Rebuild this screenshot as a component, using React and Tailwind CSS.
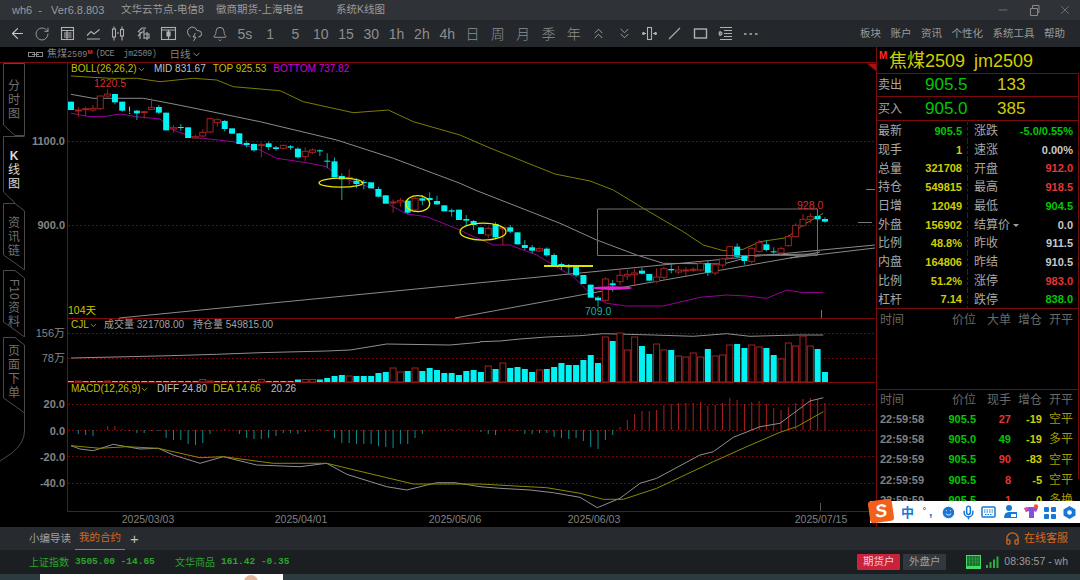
import { ArrowLeft, RotateCw, CloudLightning, Bell, ChevronsUp, ChevronsDown, Headphones, ChevronDown, X, Minus, Mic, Smile } from 'lucide-react'

// 图上数据都是从 3 倍放大图上量的，除以 3 再加原点就是页面坐标
const CYAN = '#00f2f2'
const RED = '#a32222'
const stepX = 7.32
const xAt = (i) => 71 + stepX * i

// [type, bodyTop, bodyBottom, high, low]
const candlesA = [
  ['c',125,150,125,150],['r',150,153,142,172],['r',146,149,140,168],['r',145,150,135,155],['r',108,146,108,150],
  ['r',102,108,88,112],['c',102,127,102,133],['c',125,152,125,155],['w',155,156,140,162],['c',152,160,150,180],
  ['r',155,158,152,176],['r',142,148,115,150],['c',141,158,135,162],['c',158,211,158,211],['r',203,207,195,218],
  ['c',201,204,192,212],['c',202,234,202,234],['r',230,234,225,236],['r',217,228,208,232],['r',176,216,173,220],
  ['r',179,188,175,200],['c',183,207,180,215],['c',205,221,205,221],['c',220,252,220,252],['c',249,255,242,262],
  ['c',252,271,250,275],['r',254,257,248,292],['c',250,261,245,270],['c',262,267,258,272],['r',256,265,254,268],
  ['c',259,263,255,270],['c',266,292,262,296],['r',274,290,262,304],['r',270,277,265,282],['c',271,273,268,288],
  ['c',302,305,280,325],['c',304,352,292,352],['c',348,358,340,420],['r',352,356,328,374],['c',362,372,355,385],
  ['c',366,369,360,388],['c',367,385,367,385],['c',387,410,380,412],['c',406,431,406,431],['r',426,429,418,458],
  ['r',421,426,414,440],['c',422,458,420,462],['r',415,450,412,452],['c',415,422,405,435],['c',414,420,397,424],
  ['c',423,433,407,435],['c',436,454,436,454],['c',451,455,446,470],['c',449,480,449,480],
]
const candlesB = [
  ['c',87,92,75,105],['c',93,105,90,120],['c',112,132,112,132],['r',115,135,110,145],['c',102,142,97,144],
  ['r',112,116,110,165],['c',112,125,105,130],['c',127,163,127,163],['c',165,174,150,180],['c',172,182,165,190],
  ['r',176,183,172,186],['c',176,196,172,200],['c',195,226,190,230],['c',222,228,218,240],['c',228,232,222,250],
  ['c',229,256,225,262],['c',255,282,255,282],['c',284,323,284,323],['c',323,331,318,350],['r',267,331,262,335],
  ['c',280,286,270,305],['r',256,275,235,285],['r',253,258,240,270],['r',249,254,236,285],['c',242,251,232,254],
  ['c',252,272,252,272],['r',261,274,235,280],['r',236,262,230,268],['c',237,241,222,250],['r',240,246,228,252],
  ['r',240,243,232,258],['r',238,241,232,246],['r',220,240,215,244],['c',220,248,212,258],['r',224,249,222,256],
  ['r',207,225,203,232],['r',170,204,168,206],['c',170,200,160,205],['c',198,213,195,224],['r',175,214,172,220],
  ['r',157,184,150,188],['c',163,180,150,184],['c',184,187,172,196],['r',176,189,170,194],['r',140,167,134,170],
  ['r',106,140,100,142],['r',88,107,72,110],['r',80,88,70,100],['c',78,88,78,88],['c',87,95,82,98],
]
const candles = [
  ...candlesA.map(([t, a, b, h, l]) => [t, 60 + a / 3, 60 + b / 3, 60 + h / 3, 60 + l / 3]),
  ...candlesB.map(([t, a, b, h, l]) => [t, 190 + a / 3, 190 + b / 3, 190 + h / 3, 190 + l / 3]),
]

const volumes = [
  ...Array.from({ length: 35 }, (_, i) => [[1,5,18,19,26,32,33].includes(i) ? 'r' : 'c', [18,26,32].includes(i) ? 2.5 : [31,33,34].includes(i) ? 2.5 : 1]),
  ['c',4],['c',6],['c',7],['r',6],['c',6],['c',6],['c',6],['c',9],['c',10],['r',14],['r',10],['c',11],['r',14],['c',11],
  ['c',14],['c',12],['c',9],['c',9],['c',7],['c',11],['c',12],['c',10],['r',16],['c',13],['r',19],['c',14],['c',15],['c',13],
  ['c',10],['r',12],['c',13],['c',15],['c',19],['c',17],['c',17],['c',22],['c',27],['c',19],['r',45],['c',41],['r',49],['r',32],
  ['r',45],['c',36],['c',28],['r',38],['r',32],['c',32],['r',26],['r',25],['r',29],['r',25],['c',33],['r',26],['r',27],['r',37],
  ['c',38],['c',34],['r',37],['r',35],['c',34],['c',27],['r',23],['r',39],['r',36],['r',46],['r',36],['c',33],['c',10],
]

const macdBars = [
  0,-4,-5,-6,0,4,4,1,-1,-3,-3,-1,-1,-8,-10,-10,-14,-15,-13,-4,0,1,0,-4,-8,-9,-9,-8,-6,-3,-3,-4,-2,0,1,-1,-8,-13,-13,-14,-14,-14,-16,-17,-18,-14,-14,-8,-4,0,0,1,1,1,0,0,-2,
  -4,-5,0,1,-1,-4,-4,-3,-3,-7,-8,-9,-8,-11,-17,-19,-10,-5,3,10,16,19,19,20,25,26,27,27,27,28,24,25,27,32,30,26,28,29,26,22,20,23,27,31,32,31,27,
]

const pts = (list, ox, oy) => list.map(([x, y]) => `${(ox + x / 3).toFixed(1)},${(oy + y / 3).toFixed(1)}`).join(' ')

const bollTop = pts([[33,48],[150,55],[230,55],[300,65],[400,55],[470,60],[520,80],[660,92],[730,125],[820,145],[880,158],[985,150],[1060,185],[1200,225]], 60, 60) + ' 490,148 520,160 555,174 590,181 ' + pts([[490,0],[580,55],[700,125],[760,165],[820,182],[880,178],[930,155],[1010,143],[1060,105],[1120,70]], 450, 190)
const bollMid = pts([[33,103],[100,115],[250,115],[330,130],[430,150],[600,185],[830,240],[1000,295],[1200,370]], 60, 60) + ' ' + pts([[75,0],[330,100],[440,150],[560,195],[640,220],[820,222],[920,195],[1100,192]], 450, 190)
const bollBottom = pts([[33,160],[90,170],[130,170],[180,162],[230,170],[300,177],[340,210],[400,232],[520,245],[600,270],[650,295],[740,308],[800,320],[830,345],[890,370],[940,385],[990,435],[1040,462],[1100,470],[1200,510]], 60, 60) + ' ' + pts([[60,135],[130,165],[180,165],[260,195],[310,225],[370,260],[430,320],[470,340],[530,348],[640,348],[750,322],[830,315],[890,318],[950,325],[1010,300],[1060,308],[1120,307]], 450, 190)
const volLine = pts([[33,129],[330,122],[470,118],[600,113],[800,108],[870,105],[980,87],[1170,90],[1260,82]], 60, 315) + ' ' + pts([[0,80],[60,78],[120,72],[200,66],[300,62],[370,56],[520,60],[640,64],[740,56],[810,64],[950,60],[1030,60]], 480, 315)
const deaLine = pts([[33,392],[120,400],[200,395],[295,400],[420,428],[490,425],[640,445],[800,445],[1060,507],[1260,507]], 60, 315) + ' ' + pts([[90,512],[200,518],[300,535],[370,553],[430,553],[530,520],[700,440],[800,395],[900,352],[950,335],[1030,290]], 480, 315)
const diffLine = pts([[33,392],[60,402],[100,407],[160,388],[240,402],[295,400],[340,420],[420,445],[490,425],[590,450],[720,455],[800,445],[860,478],[980,515],[1040,525],[1130,503],[1185,503],[1260,515]], 60, 315) + ' ' + pts([[60,520],[150,525],[220,533],[300,547],[352,578],[420,550],[480,505],[530,490],[660,420],[700,410],[760,367],[840,335],[900,325],[990,258],[1030,248]], 480, 315)

function Chart() {
  const axis = [[141,'1100.0'],[225,'900.0'],[333,'156万'],[358,'78万'],[404,'20.0'],[431,'0.0'],[457,'-20.0'],[483,'-40.0']]
  const grid = [141,225,333,358,404,430,456,483]
  const dates = [[148,'2025/03/03'],[301,'2025/04/01'],[455,'2025/05/06'],[594,'2025/06/03'],[821,'2025/07/15']]
  return (
    <svg className="block" width="851" height="464" viewBox="25 63 851 464">
      {axis.map(([y, t]) => (
        <text key={t} x="65" y={y + 4} textAnchor="end" fontSize="11" fontWeight={t.includes('万') ? 400 : 700} fill="#858585">{t}</text>
      ))}
      {grid.map(y => <line key={y} x1="68" x2="875" y1={y + 0.5} y2={y + 0.5} stroke="#6e0808" strokeDasharray="2 2" />)}
      <path d="M67.5 63V511.5H875.5M68 318.5H875M68 382.5H875" fill="none" stroke="#7c0a0a" />
      <polygon points="867,63.5 876,63.5 876,71" fill="#b00d0d" />

      {/* 主图 */}
      <polyline points={bollTop} fill="none" stroke="#7d7d00" />
      <polyline points={bollMid} fill="none" stroke="#8a8a8a" />
      <polyline points={bollBottom} fill="none" stroke="#980098" />
      <path d="M119 318L662 265L875 245M455 318L630 286L790 258L820 252M790 258L875 248" fill="none" stroke="#8a8a8a" />
      {candles.map(([t, top, bot, hi, lo], i) => {
        const x = xAt(i)
        const color = t === 'c' ? '#0fa5a5' : t === 'r' ? RED : '#bbb'
        return (
          <g key={i}>
            <line x1={x} x2={x} y1={hi} y2={lo} stroke={color} />
            <rect x={x - 3} y={top} width="6" height={Math.max(bot - top, 1)} fill={t === 'c' ? CYAN : '#000'} stroke={t === 'r' ? RED : 'none'} />
          </g>
        )
      })}
      <ellipse cx="341" cy="182.7" rx="22" ry="4.5" fill="none" stroke="#e8e800" strokeWidth="1.3" />
      <ellipse cx="417.7" cy="203.7" rx="12" ry="8" fill="none" stroke="#e8e800" strokeWidth="1.3" />
      <ellipse cx="483" cy="231.7" rx="23" ry="8.5" fill="none" stroke="#e8e800" strokeWidth="1.3" />
      <line x1="544" x2="593" y1="266" y2="266" stroke="#e0e000" strokeWidth="2" />
      <ellipse cx="612" cy="288" rx="20" ry="1.8" fill="#e020d0" />
      <path d="M817.5 255V209H597.5V255.5H817.5" fill="none" stroke="#707070" />
      <path d="M858 222.5H872M866 189.5H875M821.5 310V318" stroke="#777" />
      <text x="94" y="87" fontSize="10.5" fill="#d03030">1220.5</text>
      <text x="585" y="315" fontSize="10.5" fill="#10b0b0">709.0</text>
      <text x="797" y="209" fontSize="10.5" fill="#d03030">928.0</text>
      <text x="68" y="314" fontSize="10.5" fill="#c8c800">104天</text>

      {/* 成交量 */}
      <polyline points={volLine} fill="none" stroke="#8f8f8f" />
      {volumes.map(([t, h], i) => (
        <rect key={i} x={xAt(i) - 3} y={382 - h} width="6" height={h} fill={t === 'c' ? CYAN : '#000'} stroke={t === 'r' ? RED : 'none'} />
      ))}

      {/* MACD */}
      {macdBars.map((v, i) => v !== 0 && (
        <line key={i} x1={xAt(i)} x2={xAt(i)} y1="430" y2={430 - v} stroke={v > 0 ? '#a82020' : '#0c8f8f'} />
      ))}
      <polyline points={diffLine} fill="none" stroke="#8f8f8f" />
      <polyline points={deaLine} fill="none" stroke="#8a8a00" />
      <line x1="820.5" x2="820.5" y1="503" y2="511" stroke="#555" />

      {dates.map(([x, t]) => (
        <text key={t} x={x} y="523" textAnchor="middle" fontSize="10.5" fill="#808080">{t}</text>
      ))}
    </svg>
  )
}

function Legend({ className, children }) {
  return <div className={`absolute left-[71px] flex items-center text-[10px] leading-none ${className}`}>{children}</div>
}

function RailTab({ height, first, active, className = '', children }) {
  const h = height
  const d = first
    ? `M1.5 0.5H22.5V${h - 0.5}H13L1.5 ${h - 11}Z`
    : active
      ? `M22.5 0.5H1.5V${h - 11}L13 ${h}`
      : `M1.5 0.5H13L22.5 8V${h}L13 ${h - 7}L1.5 ${h - 15}Z`
  return (
    <div className={`relative w-[24px] flex flex-col items-center justify-center gap-[2px] text-[12px] leading-[12px] ${active ? 'text-[#d8d8d8]' : 'text-[#707070]'} ${className}`} style={{ height }}>
      <svg className="absolute left-0 top-0" width="24" height={h} fill="none" stroke="#4a4a4a"><path d={d} /></svg>
      {children}
    </div>
  )
}

function Rail() {
  return (
    <div className="w-[25px] shrink-0 flex flex-col items-start pl-[2px]">
      <RailTab height={73}  first><span>分</span><span>时</span><span>图</span></RailTab>
      <RailTab height={67} active><b>K</b><span>线</span><span>图</span></RailTab>
      <RailTab height={67}><span>资</span><span>讯</span><span>链</span></RailTab>
      <RailTab height={67}><span className="[writing-mode:vertical-rl]">F10</span><span>资</span><span>料</span></RailTab>
      <RailTab height={76} className="pb-[6px]"><span>页</span><span>面</span><span>下</span><span>单</span></RailTab>
      <svg className="-ml-[2px]" width="25" height="62" fill="none" stroke="#4a4a4a"><path d="M24.5 0V18Q24.5 30 12 40L0 48" /></svg>
    </div>
  )
}

function Stat({ label, value, color, right, caret }) {
  return (
    <div className={`flex items-center justify-between h-[18.7px] ${right ? 'pl-[6px] pr-[5px]' : 'pl-[1px] pr-[5px] border-r border-dashed border-[#6e0808]'}`}>
      <span className="text-[12px] text-[#a8a8a8] flex items-center">
        {label}
        {caret && <span className="ml-[3px] mt-[2px] border-x-[3px] border-t-[3px] border-x-transparent border-t-[#a0a0a0]" />}
      </span>
      <span className={`text-[11px] font-bold ${color}`}>{value}</span>
    </div>
  )
}

const YEL = 'text-[#cfcf00]'
const GRN = 'text-[#00c800]'
const REDT = 'text-[#e53535]'
const WHT = 'text-[#c8c8c8]'

const statRows = [
  ['最新','905.5',GRN,'涨跌','-5.0/0.55%',GRN],
  ['现手','1',YEL,'速涨','0.00%',WHT],
  ['总量','321708',YEL,'开盘','912.0',REDT],
  ['持仓','549815',YEL,'最高','918.5',REDT],
  ['日增','12049',YEL,'最低','904.5',GRN],
  ['外盘','156902',YEL,'结算价','0.0',WHT],
  ['比例','48.8%',YEL,'昨收','911.5',WHT],
  ['内盘','164806',YEL,'昨结','910.5',WHT],
  ['比例','51.2%',YEL,'涨停','983.0',REDT],
  ['杠杆','7.14',YEL,'跌停','838.0',GRN],
]

const ticks = [
  ['22:59:58','905.5',GRN,'27',REDT,'-19','空平'],
  ['22:59:58','905.0',GRN,'49',GRN,'-19','多平'],
  ['22:59:59','905.5',GRN,'90',REDT,'-83','空平'],
  ['22:59:59','905.5',GRN,'8',REDT,'-5','空平'],
  ['22:59:59','905.5',GRN,'1',REDT,'0','多换'],
]

function TickHeader({ third }) {
  return (
    <div className="grid grid-cols-[63px_36px_35px_31px_31px] text-[12px] text-[#686868] items-center">
      <span className="pl-[3px]">时间</span>
      <span className="text-right">价位</span>
      <span className="text-right">{third}</span>
      <span className="text-right">增仓</span>
      <span className="text-right">开平</span>
    </div>
  )
}

function QuotePanel() {
  return (
    <div className="w-[204px] shrink-0 border-l border-[#7c0a0a] h-full pt-px">
      <div className="h-[25px] flex items-center gap-[9px] text-[18px] text-[#cfcf00] leading-none pl-[12px] relative">
        <span className="absolute left-[2px] top-[3px] text-[10px] font-bold text-[#ff2a2a]">M</span>
        <span>焦煤2509</span>
        <span>jm2509</span>
      </div>
      <div className="w-[202px] border-r border-[#7c0a0a] h-[406px]">
        <div className="h-[24px] border-y border-[#7c0a0a] flex items-center pl-[1px]">
          <span className="text-[12px] text-[#a8a8a8] w-[47px]">卖出</span>
          <span className="text-[17px] text-[#00c800] w-[72px]">905.5</span>
          <span className="text-[17px] text-[#cfcf00]">133</span>
        </div>
        <div className="h-[24px] border-b border-[#7c0a0a] flex items-center pl-[1px]">
          <span className="text-[12px] text-[#a8a8a8] w-[47px]">买入</span>
          <span className="text-[17px] text-[#00c800] w-[72px]">905.0</span>
          <span className="text-[17px] text-[#cfcf00]">385</span>
        </div>
        <div className="grid grid-cols-[91px_110px] h-[188px] pt-px border-b border-[#7c0a0a]">
          {statRows.map(([a, b, c, d, e, f]) => [
            <Stat key={a + b} label={a} value={b} color={c} />,
            <Stat key={d} label={d} value={e} color={f} right caret={d === '结算价'} />,
          ])}
        </div>
        <div className="h-[22px] flex flex-col justify-center"><TickHeader third="大单" /></div>
        <div className="h-[59px] border-b border-[#7c0a0a]" />
        <div className="h-[20px] flex flex-col justify-center"><TickHeader third="现手" /></div>
        <div className="h-[40px] -mt-px">
          {ticks.map(([t, p, pc, v, vc, d, k], i) => (
            <div key={i} className="grid grid-cols-[63px_36px_35px_31px_31px] h-[20.3px] items-center text-[11px] font-bold">
              <span className="pl-[3px] text-[#808080]">{t}</span>
              <span className={`text-right ${pc}`}>{p}</span>
              <span className={`text-right ${vc}`}>{v}</span>
              <span className="text-right text-[#cfcf00]">{d}</span>
              <span className="text-right font-normal text-[12px] text-[#a69a00]">{k}</span>
            </div>
          ))}
        </div>
      </div>
    </div>
  )
}

const Ic = ({ children }) => (
  <svg width="17" height="17" viewBox="0 0 17 17" fill="none" stroke="#b0b0b0" strokeWidth="1.1">{children}</svg>
)

const toolbar = [
  <ArrowLeft size={17} color="#c8c8c8" strokeWidth={1.6} />,
  <RotateCw size={16} color="#b0b0b0" strokeWidth={1.2} />,
  <Ic><rect x="2.5" y="2.5" width="12" height="12" /><path d="M2.5 5.5H14.5M5 8H12.5M5 10H12.5M5 12H12.5M8 5.5V14.5" /></Ic>,
  <Ic><path d="M2 10.5L6 6.5L9 9L14.5 4.5M2 14H15" /></Ic>,
  <Ic><path d="M4 1.5V4M4 12V15.5M12 1.5V4.5M12 11V15.5" /><rect x="2.5" y="4" width="3" height="8" /><rect x="10.5" y="4.5" width="3" height="6.5" /><path d="M7 8H9" /></Ic>,
  <Ic><path d="M3 7L7 3H11M3 11L7 7H9M5 14V7M9 4V14M9 9H14V13H9M12 7V15" /></Ic>,
  <Ic><rect x="1.5" y="2.5" width="14" height="12" /><path d="M1.5 5H15.5M8.5 5V14.5" /><rect x="7" y="7" width="3" height="4" fill="#b0b0b0" /></Ic>,
  <CloudLightning size={17} color="#b0b0b0" strokeWidth={1.3} />,
  <Bell size={16} color="#b0b0b0" strokeWidth={1.2} />,
  '5s','1','5','10','15','30','1h','2h','4h','日','周','月','季','年',
  <ChevronsUp size={17} color="#b0b0b0" strokeWidth={1.2} />,
  <ChevronsDown size={17} color="#b0b0b0" strokeWidth={1.2} />,
  <Ic><rect x="6.5" y="2.5" width="4" height="12" /><path d="M1 8.5H5M12 8.5H16" /><path d="M2.5 7V10M14.5 7V10" strokeWidth="2" /></Ic>,
  <Ic><path d="M3 14L14 3" /></Ic>,
  <Ic><rect x="2.5" y="4" width="12" height="9" strokeWidth="1.4" /></Ic>,
  <Ic><path d="M3 2.5H15M7 5.5H15M7 8.5H15M7 11.5H15M3 14.5H15M3 6V11" /><circle cx="3.5" cy="8.5" r="1.5" /></Ic>,
  <Ic><path d="M2 9H4.5M7.5 9H10M13 9H15.5" strokeWidth="1.6" /></Ic>,
]

function SogouBar() {
  return (
    <div className="absolute left-[870px] top-[501px] w-[210px] h-[22px] bg-white flex items-center">
      <div className="absolute -left-[1px] -top-[1px] w-[24px] h-[22px] bg-[#f3601c] rounded-[3px] rotate-[-8deg] flex items-center justify-center text-white font-black italic text-[18px] leading-none">S</div>
      <span className="absolute left-[31px] text-[#1677d9] font-bold text-[13px] font-['Noto_Sans_CJK_SC']">中</span>
      <span className="absolute left-[53px] w-[3px] h-[3px] rounded-full border border-[#1677d9] top-[6px]" />
      <span className="absolute left-[59px] text-[#1677d9] font-bold text-[12px] top-[2px]">,</span>
      <Smile className="absolute left-[71px]" size={15} color="#fff" fill="#1677d9" strokeWidth={1.6} />
      <Mic className="absolute left-[91px]" size={15} color="#1677d9" strokeWidth={2.4} />
      <svg className="absolute left-[111px]" width="15" height="15"><rect x="1" y="2" width="13" height="10" rx="1" fill="none" stroke="#1677d9" strokeWidth="1.5" /><path d="M3 5H12M3 7H12M4 9.5H11" stroke="#1677d9" strokeDasharray="1.5 1" /></svg>
      <svg className="absolute left-[133px]" width="15" height="16"><circle cx="6" cy="4" r="3" fill="#1677d9" /><path d="M1 14Q1 8 6 8H14V14Z" fill="#1677d9" /><rect x="8" y="10" width="5" height="3" fill="#fff" /></svg>
      <svg className="absolute left-[153px]" width="16" height="16"><path d="M1 4L6 3L10 3L15 4L13 8L11 7V14H6V7L3 8Z" fill="#8a4fd8" /><path d="M1 4L6 3L3 8Z" fill="#e0509a" /><circle cx="13" cy="2.5" r="2.2" fill="#f0552d" /></svg>
      <svg className="absolute left-[172px]" width="15" height="15" fill="#1677d9"><rect x="2" y="2" width="5" height="5" rx="1" /><rect x="9" y="2" width="5" height="5" rx="1" /><rect x="2" y="9" width="5" height="5" rx="1" /><rect x="9" y="9" width="5" height="5" rx="1" /></svg>
      <svg className="absolute left-[192px]" width="15" height="15"><path d="M7.5 1L13.5 4.5V10.5L7.5 14L1.5 10.5V4.5Z" fill="#1677d9" /><circle cx="7.5" cy="7.5" r="2.3" fill="#fff" /></svg>
    </div>
  )
}

export default function App() {
  return (
    <div className="relative w-[1080px] h-[580px] overflow-hidden flex flex-col bg-black font-['Liberation_Sans','Noto_Sans_CJK_SC',sans-serif]">
      {/* 标题栏 */}
      <div className="h-[20px] bg-[#2f3236] flex items-center text-[10.5px] text-[#9b9b9b] relative shrink-0">
        <span className="ml-[12px] w-[109px] text-[11px]">wh6 &nbsp;- &nbsp;&nbsp;Ver6.8.803</span>
        <span className="w-[95px]">文华云节点-电信8</span>
        <span className="w-[120px]">徽商期货-上海电信</span>
        <span>系统K线图</span>
        <div className="absolute right-[8px] top-[3px] flex gap-[17px]">
          <Minus size={14} color="#888" strokeWidth={1.2} />
          <svg width="14" height="14" fill="none" stroke="#888"><path d="M3.5 5.5H10.5V12.5H3.5ZM5.5 5V2.5H12V9.5H11" /></svg>
          <X size={14} color="#888" strokeWidth={1.2} />
        </div>
      </div>

      {/* 工具栏 */}
      <div className="h-[27px] bg-[#24272b] flex items-center shrink-0 pl-[4.5px]">
        {toolbar.map((item, i) => (
          <div key={i} className="w-[25.3px] flex items-center justify-center text-[14px] font-light text-[#8e8e8e] leading-none">{item}</div>
        ))}
        <div className="ml-auto mr-[15px] flex gap-[9.5px] text-[10.5px] text-[#9b9b9b]">
          <span>板块</span><span>账户</span><span>资讯</span><span>个性化</span><span>系统工具</span><span>帮助</span>
        </div>
      </div>

      {/* 主体 */}
      <div className="h-[480px] flex shrink-0">
        <div className="w-[876px] shrink-0 flex flex-col relative">
          <div className="h-[16px] flex items-center border-b border-[#7c0a0a] text-[10px] text-[#828282] leading-none pl-[28px]">
            <svg width="15" height="8" fill="none" stroke="#888" className="mr-[4px]"><rect x="0.5" y="1.5" width="6" height="4" /><rect x="8.5" y="1.5" width="6" height="4" /><path d="M4 3.5H11" /></svg>
            <span>焦煤<span className="font-['Liberation_Mono'] text-[8.5px]">2509</span></span>
            <sup className="text-[6px] font-bold text-[#e03030]">M</sup>
            <span className="font-['Liberation_Mono'] text-[8.5px] tracking-[-0.4px] ml-[3px]">(DCE&nbsp;&nbsp;jm2509)</span>
            <span className="ml-[13px] text-[10.5px]">日线</span>
            <ChevronDown size={11} color="#999" />
          </div>
          <div className="flex">
            <Rail />
            <Chart />
          </div>
          <Legend className="top-[17px] gap-[7px]">
            <span className="text-[#c0c000] flex items-center w-[76px]">BOLL(26,26,2)<ChevronDown size={9} /></span>
            <span className="text-[#c0c0c0]">MID 831.67</span>
            <span className="text-[#c0c000]">TOP 925.53</span>
            <span className="text-[#d000d0]">BOTTOM 737.82</span>
          </Legend>
          <Legend className="top-[273px]">
            <span className="text-[#c0c000] flex items-center w-[33px]">CJL<ChevronDown size={9} /></span>
            <span className="text-[#a0a0a0] w-[89px]">成交量 321708.00</span>
            <span className="text-[#a0a0a0]">持仓量 549815.00</span>
          </Legend>
          <Legend className="top-[337px]">
            <span className="text-[#c0c000] flex items-center w-[86px]">MACD(12,26,9)<ChevronDown size={9} /></span>
            <span className="text-[#c0c0c0] w-[56px]">DIFF 24.80</span>
            <span className="text-[#c0c000] w-[58px]">DEA 14.66</span>
            <span className="text-[#c0c0c0]">20.26</span>
          </Legend>
        </div>
        <QuotePanel />
      </div>

      {/* 底部标签 */}
      <div className="h-[23px] bg-[#272a2e] flex items-center text-[10.5px] text-[#a0a0a0] shrink-0 relative">
        <span className="ml-[29px] w-[46px]">小编导读</span>
        <span className="h-full w-[50px] flex items-center justify-center text-[#d9681e] border-b border-[#d9681e]">我的合约</span>
        <span className="ml-[5px] text-[15px] leading-none text-[#c0c0c0]">+</span>
        <div className="absolute right-[12px] flex items-center gap-[4px] text-[#d9681e] text-[11px]">
          <Headphones size={15} color="#d9681e" />
          在线客服
        </div>
      </div>

      {/* 行情条 */}
      <div className="h-[24px] bg-[#1c1f22] flex items-center text-[10px] text-[#2ba52b] shrink-0">
        <span className="ml-[29px]">上证指数</span>
        <span className="ml-[6px] font-['Liberation_Mono'] font-bold text-[9.5px] w-[100px]">3505.00 -14.65</span>
        <span>文华商品</span>
        <span className="ml-[6px] font-['Liberation_Mono'] font-bold text-[9.5px]">161.42 -0.35</span>
        <div className="ml-auto flex items-center">
          <span className="w-[43px] h-[16px] bg-[#c8233a] text-[#f0d0d0] text-[10.5px] flex items-center justify-center rounded-[1px]">期货户</span>
          <span className="ml-[3px] w-[43px] h-[16px] bg-[#33383d] text-[#a0a0a0] text-[10.5px] flex items-center justify-center rounded-[1px]">外盘户</span>
          <svg className="ml-[20px]" width="15" height="14"><rect width="15" height="14" fill="#48d868" /><rect x="1" y="1" width="13" height="10" fill="#17702c" /><path d="M3.5 1V11M6.5 1V11M9.5 1V11M12 1V11M1 4H14M1 7H14" stroke="#2fa648" strokeWidth="0.6" /></svg>
          <svg className="ml-[5px]" width="13" height="13" fill="#2fae3f"><rect x="0" y="9" width="2" height="3" /><rect x="3.5" y="6" width="2" height="6" /><rect x="7" y="3.5" width="2" height="8.5" /><rect x="10.5" y="0.5" width="2" height="11.5" /></svg>
          <span className="ml-[5px] mr-[12px] text-[#9b9b9b] text-[10.5px]">08:36:57 - wh</span>
        </div>
      </div>

      {/* 下面被截掉的窗口 */}
      <div className="flex-1 bg-[#2b3b40] relative">
        <div className="ml-[40px] w-[243px] h-full bg-white relative">
          <span className="absolute left-[204px] top-[1px] w-[14px] h-[14px] rounded-full bg-[#e5b9a0]" />
        </div>
      </div>

      <SogouBar />
    </div>
  )
}
